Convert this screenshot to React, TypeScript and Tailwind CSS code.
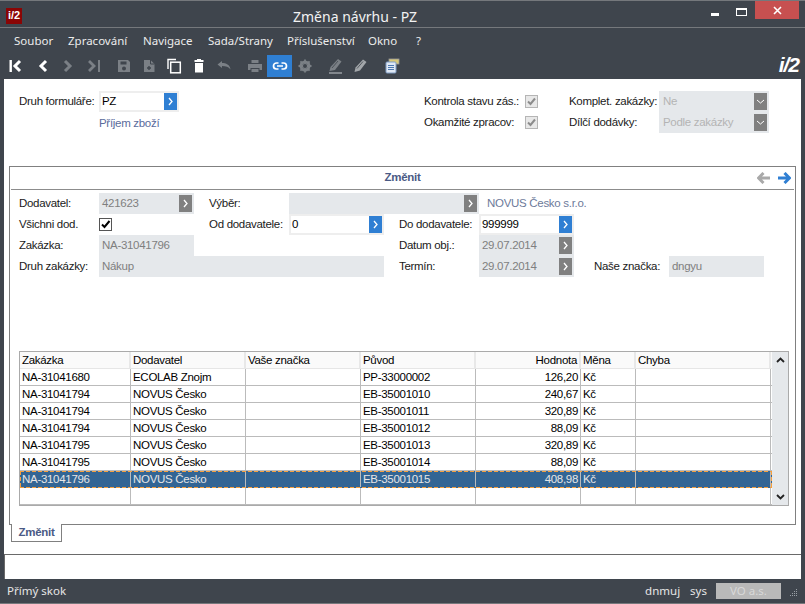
import React from "react";

const gray = "#7b8086";

function I({ w = 16, h = 16, children }: { w?: number; h?: number; children: React.ReactNode }) {
  return (
    <svg width={w} height={h} viewBox={`0 0 ${w} ${h}`} className="block">
      {children}
    </svg>
  );
}

const toolbar: { cls: string; active?: boolean; icon: React.ReactNode }[] = [
  { cls: "ml-[3px]", icon: <I><rect x="1.5" y="2" width="2.4" height="12" fill="#fff" /><path d="M12 3 L7 8 L12 13" fill="none" stroke="#fff" strokeWidth="3" /></I> },
  { cls: "ml-[2px]", icon: <I><path d="M11 3 L6 8 L11 13" fill="none" stroke="#fff" strokeWidth="3" /></I> },
  { cls: "", icon: <I><path d="M5 3 L10 8 L5 13" fill="none" stroke={gray} strokeWidth="3" /></I> },
  { cls: "ml-[1px]", icon: <I><path d="M3 3 L8 8 L3 13" fill="none" stroke={gray} strokeWidth="2.8" /><rect x="12" y="2" width="2" height="12" fill={gray} /></I> },
  { cls: "ml-[5px]", icon: <I><path fillRule="evenodd" d="M2 2 H12 L14 4 V14 H2 Z M4.5 3.5 V6.5 H10.5 V3.5 Z M8 8.5 A2 2 0 1 0 8 12.5 A2 2 0 1 0 8 8.5 Z" fill={gray} /></I> },
  { cls: "", icon: <I><path d="M3 2 H9.5 L13.5 6 V14 H3 Z" fill={gray} /><path d="M9.5 2 V6 H13.5" fill="none" stroke="#3f454d" strokeWidth="1" /><path d="M8 8 V12 M6 10 H10" stroke="#3f454d" strokeWidth="1.4" /></I> },
  { cls: "", icon: <I><path d="M2 11 V1.5 H10" fill="none" stroke="#fff" strokeWidth="1.4" /><rect x="4.7" y="4.2" width="9.6" height="10.6" fill="none" stroke="#fff" strokeWidth="1.5" /></I> },
  { cls: "", icon: <I><rect x="3.5" y="2" width="9" height="2" fill="#fff" /><rect x="6" y="1" width="4" height="2" fill="#fff" /><path d="M4 5 H12 V14.5 H4 Z" fill="#fff" /></I> },
  { cls: "", icon: <I><path d="M1.5 6.5 L6 3 V5 C10 5 14 6.5 14.5 11.5 C12.5 8.8 10 8 6 8 V10 Z" fill={gray} /></I> },
  { cls: "ml-[6px]", icon: <I><rect x="4.5" y="2" width="7" height="3" fill={gray} /><path d="M1 6 H15 V12 H12.5 V10 H3.5 V12 H1 Z" fill={gray} /><rect x="4.5" y="11" width="7" height="3" fill={gray} /></I> },
  { cls: "", active: true, icon: <I><path d="M6.5 5 H4.5 A3 3 0 0 0 4.5 11 H6.5 M9.5 5 H11.5 A3 3 0 0 1 11.5 11 H9.5 M5 8 H11" fill="none" stroke="#fff" strokeWidth="1.7" /></I> },
  { cls: "", icon: <I><circle cx="8" cy="8" r="4.2" fill="none" stroke={gray} strokeWidth="2.6" /><path d="M8 1.5 V14.5 M1.5 8 H14.5 M3.4 3.4 L12.6 12.6 M12.6 3.4 L3.4 12.6" stroke={gray} strokeWidth="1.8" /><circle cx="8" cy="8" r="2" fill="#3f454d" /></I> },
  { cls: "ml-[5px]", icon: <I><path d="M11 1 L14.5 3.5 L8 12 L2.5 13 L3.5 9 Z" fill={gray} /><path d="M5 10 L11 3" stroke="#3f454d" strokeWidth="0.8" /><path d="M2 15 H15" stroke="#a8acb0" strokeWidth="1.3" /></I> },
  { cls: "", icon: <I><path d="M11 1.5 L14.5 4 L8 12.5 L2.5 14 L3.5 9.5 Z" fill="#a2a6aa" /><path d="M5 10.5 L11 3.5" stroke="#3f454d" strokeWidth="0.8" /></I> },
  { cls: "ml-[7px]", icon: <I><rect x="5" y="1" width="10" height="5" fill="#d8c878" stroke="#999" strokeWidth="0.8" /><rect x="2" y="4" width="10" height="11" rx="1" fill="#dfe8f4" stroke="#7f9cc4" strokeWidth="1" /><path d="M4 7.5 H10 M4 9.5 H10 M4 11.5 H10" stroke="#4c78b0" strokeWidth="1" /></I> },
];

const menu = [
  ["Soubor", "w-[54px]"],
  ["Zpracování", "w-[75px]"],
  ["Navigace", "w-[65px]"],
  ["Sada/Strany", "w-[79px]"],
  ["Příslušenství", "w-[81px]"],
  ["Okno", "w-[48px]"],
  ["?", "w-[20px]"],
];

function Go({ blue }: { blue?: boolean }) {
  return (
    <span className={`flex h-[17px] w-[13px] shrink-0 items-center justify-center ${blue ? "bg-[#2f7fd3]" : "bg-[#808080]"}`}>
      <svg width="7" height="9" viewBox="0 0 7 9"><path d="M2 1 L5 4.5 L2 8" fill="none" stroke="#fff" strokeWidth="1.3" /></svg>
    </span>
  );
}

function Lbl({ w, children }: { w: string; children: React.ReactNode }) {
  return <span className={`${w} shrink-0 whitespace-nowrap pt-[1px] text-[#1a1a1a]`}>{children}</span>;
}

function RO({ w, text, go }: { w: string; text?: string; go?: boolean }) {
  return (
    <div className={`${w} flex h-[21px] shrink-0 items-center justify-between bg-[#e5e8eb] pl-[3px] pr-[2px] text-[#7f7f7f]`}>
      <span className="whitespace-nowrap pt-[1px]">{text}</span>
      {go && <Go />}
    </div>
  );
}

function Inp({ w, text }: { w: string; text: string }) {
  return (
    <div className={`${w} flex h-[21px] shrink-0 items-center justify-between border-2 border-[#eeeeee] bg-white pl-[1px] text-black`}>
      <span className="whitespace-nowrap">{text}</span>
      <Go blue />
    </div>
  );
}

function Dis({ text }: { text: string }) {
  return (
    <div className="flex h-[21px] w-[110px] items-center justify-between bg-[#e5e8eb] pl-[4px] pr-[2px] text-[#b4b4b4]">
      <span className="pt-[1px]">{text}</span>
      <span className="flex h-[17px] w-[13px] items-center justify-center bg-[#808080]">
        <svg width="9" height="7" viewBox="0 0 9 7"><path d="M1 2 L4.5 5 L8 2" fill="none" stroke="#fff" strokeWidth="1" /></svg>
      </span>
    </div>
  );
}

function DisCheck() {
  return (
    <span className="flex h-[13px] w-[13px] shrink-0 items-center justify-center border border-[#b5b5b5] bg-[#e8e8e8]">
      <svg width="11" height="11" viewBox="0 0 11 11"><path d="M2 5.5 L4.5 8 L9 2.5" fill="none" stroke="#8c8c8c" strokeWidth="2" /></svg>
    </span>
  );
}

const cols = ["w-[111px]", "w-[115px]", "w-[115px]", "w-[115px]", "w-[105px]", "w-[55px]", "w-[135px]"];
const header = ["Zakázka", "Dodavatel", "Vaše značka", "Původ", "Hodnota", "Měna", "Chyba"];
const rows = [
  ["NA-31041680", "ECOLAB Znojm", "", "PP-33000002", "126,20", "Kč", ""],
  ["NA-31041794", "NOVUS Česko", "", "EB-35001010", "240,67", "Kč", ""],
  ["NA-31041794", "NOVUS Česko", "", "EB-35001011", "320,89", "Kč", ""],
  ["NA-31041794", "NOVUS Česko", "", "EB-35001012", "88,09", "Kč", ""],
  ["NA-31041795", "NOVUS Česko", "", "EB-35001013", "320,89", "Kč", ""],
  ["NA-31041795", "NOVUS Česko", "", "EB-35001014", "88,09", "Kč", ""],
  ["NA-31041796", "NOVUS Česko", "", "EB-35001015", "408,98", "Kč", ""],
  ["", "", "", "", "", "", ""],
];

const dashH = "pointer-events-none absolute left-0 right-0 h-[1px] bg-[repeating-linear-gradient(90deg,#f5a040_0,#f5a040_4px,transparent_4px,transparent_6px)]";
const dashV = "pointer-events-none absolute bottom-0 top-0 w-[1px] bg-[repeating-linear-gradient(180deg,#f5a040_0,#f5a040_4px,transparent_4px,transparent_6px)]";

export default function App() {
  return (
    <div className="flex h-[604px] w-[805px] flex-col overflow-hidden border-y border-[#75787c] bg-[#3f454d] font-['Liberation_Sans',sans-serif] text-[11.5px] tracking-[-0.3px]">
      {/* title bar */}
      <div className="relative flex h-[27px] shrink-0 items-center justify-between border-b border-[#75787c] tracking-normal">
        <div className="ml-[6px] mt-[3px] flex h-[16px] w-[16px] items-center justify-center bg-[#8a0505] text-[11px] font-bold leading-none text-white">i/2</div>
        <div className="absolute left-[293px] top-[5px] whitespace-nowrap font-['Noto_Sans',sans-serif] text-[14px] leading-[22px] text-[#f2f2f2]">Změna návrhu - PZ</div>
        <div className="flex items-start self-start">
          <svg width="9" height="3" className="mr-[16px] mt-[12px]"><rect width="8" height="3" fill="#fff" /></svg>
          <span className="mr-[8px] mt-[7px] h-[8px] w-[11px] border border-t-2 border-white" />
          <span className="mr-[6px] flex h-[18px] w-[44px] items-center justify-center bg-[#c75050]">
            <svg width="9" height="9" viewBox="0 0 9 9"><path d="M1 1 L8 8 M8 1 L1 8" stroke="#fff" strokeWidth="1.6" /></svg>
          </span>
        </div>
      </div>
      {/* menu */}
      <div className="flex h-[27px] shrink-0 items-center pb-[2px] pl-[14px] font-['Noto_Sans',sans-serif] text-[11.5px] tracking-normal text-[#ececec]">
        {menu.map(([m, w]) => (
          <span key={m} className={`${w} whitespace-nowrap`}>{m}</span>
        ))}
      </div>
      {/* toolbar */}
      <div className="flex h-[24px] shrink-0 items-start justify-between pr-[6px] tracking-normal">
        <div className="flex">
          {toolbar.map((t, i) => (
            <span key={i} className={`${t.cls} flex h-[22px] w-[25px] items-center justify-center ${t.active ? "bg-[#2f7fd3]" : ""}`}>
              {t.icon}
            </span>
          ))}
        </div>
        <span className="mt-[-1px] font-['Liberation_Sans',sans-serif] text-[21px] font-bold italic leading-[22px] tracking-[-1px] text-white">i/2</span>
      </div>
      {/* content */}
      <div className="mx-[4px] flex h-[475px] shrink-0 flex-col bg-white">
        <div className="flex h-[87px] shrink-0 pl-[15px] pt-[12px]">
          <div className="w-[405px]">
            <div className="flex items-center">
              <Lbl w="w-[80px]">Druh formuláře:</Lbl>
              <Inp w="w-[80px]" text="PZ" />
            </div>
            <div className="ml-[80px] mt-[3px] text-[#5a6b9c]">Příjem zboží</div>
          </div>
          <div className="w-[145px]">
            <div className="flex h-[21px] items-center">
              <Lbl w="w-[101px]">Kontrola stavu zás.:</Lbl>
              <DisCheck />
            </div>
            <div className="flex h-[21px] items-center">
              <Lbl w="w-[101px]">Okamžité zpracov:</Lbl>
              <DisCheck />
            </div>
          </div>
          <div>
            <div className="flex h-[21px] items-center">
              <Lbl w="w-[90px]">Komplet. zakázky:</Lbl>
              <Dis text="Ne" />
            </div>
            <div className="flex h-[21px] items-center">
              <Lbl w="w-[90px]">Dílčí dodávky:</Lbl>
              <Dis text="Podle zakázky" />
            </div>
          </div>
        </div>
        {/* panel */}
        <div className="ml-[5px] h-[359px] w-[787px] shrink-0 border border-[#808080] px-[1px]">
          <div className="relative flex h-[23px] items-center justify-center border-b border-[#8c8c8c] font-bold text-[#4a5a85]">
            Změnit
            <div className="absolute right-[3px] top-[5px] flex gap-[8px]">
              <svg width="13" height="12" viewBox="0 0 13 12"><path d="M6.5 1 L1.5 6 L6.5 11 M2 6 H13" fill="none" stroke="#a9a9a9" strokeWidth="3" /></svg>
              <svg width="13" height="12" viewBox="0 0 13 12"><path d="M6.5 1 L11.5 6 L6.5 11 M11 6 H0" fill="none" stroke="#2f7fd3" strokeWidth="3" /></svg>
            </div>
          </div>
          <div className="mt-[3px] pl-[8px]">
            <div className="flex h-[21px] items-center">
              <Lbl w="w-[80px]">Dodavatel:</Lbl>
              <RO w="w-[95px]" text="421623" go />
              <Lbl w="ml-[15px] w-[80px]">Výběr:</Lbl>
              <RO w="w-[190px]" go />
              <span className="ml-[8px] pt-[1px] text-[#6d7a9a]">NOVUS Česko s.r.o.</span>
            </div>
            <div className="flex h-[21px] items-center">
              <Lbl w="w-[80px]">Všichni dod.</Lbl>
              <span className="flex h-[13px] w-[13px] shrink-0 items-center justify-center border border-[#555]">
                <svg width="11" height="11" viewBox="0 0 11 11"><path d="M2 5.5 L4.5 8 L9.5 2" fill="none" stroke="#000" strokeWidth="2" /></svg>
              </span>
              <Lbl w="ml-[97px] w-[80px]">Od dodavatele:</Lbl>
              <Inp w="w-[95px]" text="0" />
              <Lbl w="ml-[15px] w-[80px]">Do dodavatele:</Lbl>
              <Inp w="w-[95px]" text="999999" />
            </div>
            <div className="flex h-[21px] items-center">
              <Lbl w="w-[80px]">Zakázka:</Lbl>
              <RO w="w-[95px]" text="NA-31041796" />
              <Lbl w="ml-[205px] w-[80px]">Datum obj.:</Lbl>
              <RO w="w-[95px]" text="29.07.2014" go />
            </div>
            <div className="flex h-[21px] items-center">
              <Lbl w="w-[80px]">Druh zakázky:</Lbl>
              <RO w="w-[285px]" text="Nákup" />
              <Lbl w="ml-[15px] w-[80px]">Termín:</Lbl>
              <RO w="w-[95px]" text="29.07.2014" go />
              <Lbl w="ml-[20px] w-[75px]">Naše značka:</Lbl>
              <RO w="w-[95px]" text="dngyu" />
            </div>
          </div>
          {/* grid */}
          <div className="ml-[8px] mt-[74px] flex h-[155px] w-[770px] border border-[#aaaaaa]">
            <div className="w-[752px]">
              <div className="flex h-[17px] border-b border-[#e6e6e6] bg-[#fafafa]">
                {header.map((h, i) => (
                  <div key={h} className={`${cols[i]} shrink-0 border-r-2 border-[#e8e8e8] px-[2px] leading-[17px] ${i === 4 ? "text-right" : ""}`}>{h}</div>
                ))}
              </div>
              {rows.map((r, ri) => {
                const sel = ri === 6;
                return (
                  <div key={ri} className={`relative flex h-[17px] border-b ${sel ? "border-[#336594] bg-[#336594] text-[#e6e6e6]" : "border-[#bbbbbb] text-black"}`}>
                    {r.map((c, i) => (
                      <div key={i} className={`${cols[i]} shrink-0 border-r border-[#bbbbbb] px-[2px] leading-[17px] ${i === 4 ? "text-right" : ""}`}>{c}</div>
                    ))}
                    {sel && (
                      <>
                        <span className={`${dashH} top-0`} />
                        <span className={`${dashH} -bottom-[1px]`} />
                        <span className={`${dashV} left-0`} />
                        <span className={`${dashV} right-0`} />
                      </>
                    )}
                  </div>
                );
              })}
            </div>
            <div className="flex w-[16px] flex-col items-center justify-between bg-[#e5e8eb] py-[5px]">
              <svg width="9" height="6" viewBox="0 0 9 6"><path d="M1 5 L4.5 1.5 L8 5" fill="none" stroke="#222" strokeWidth="1.8" /></svg>
              <svg width="9" height="6" viewBox="0 0 9 6"><path d="M1 1 L4.5 4.5 L8 1" fill="none" stroke="#222" strokeWidth="1.8" /></svg>
            </div>
          </div>
        </div>
        {/* tab */}
        <div className="relative ml-[7px] -mt-[1px] flex h-[18px] w-[51px] items-center justify-center border border-t-0 border-[#808080] bg-white font-bold text-[#4a5a85]">Změnit</div>
      </div>
      {/* bottom strip */}
      <div className="mx-[4px] h-[25px] shrink-0 border-l border-t border-[#6a6a6a] bg-white" />
      {/* status */}
      <div className="flex h-[24px] shrink-0 items-center pb-[1px] pl-[7px] font-['Noto_Sans',sans-serif] text-[11.5px] tracking-normal text-[#e6e6e6]">
        <span>Přímý skok</span>
        <span className="ml-auto">dnmuj</span>
        <span className="ml-[10px]">sys</span>
        <span className="ml-[9px] flex h-[16px] w-[65px] items-center justify-center bg-[#b9b9b9] text-[#d8d8d8]">VO a.s.</span>
        <svg width="10" height="10" viewBox="0 0 10 10" className="ml-[7px] mr-[7px] mt-[4px]">
          <path d="M8 1h1v1H8z M6 3h1v1H6z M8 3h1v1H8z M4 5h1v1H4z M6 5h1v1H6z M8 5h1v1H8z M2 7h1v1H2z M4 7h1v1H4z M6 7h1v1H6z M8 7h1v1H8z" fill="#9aa0a6" />
        </svg>
      </div>
    </div>
  );
}
